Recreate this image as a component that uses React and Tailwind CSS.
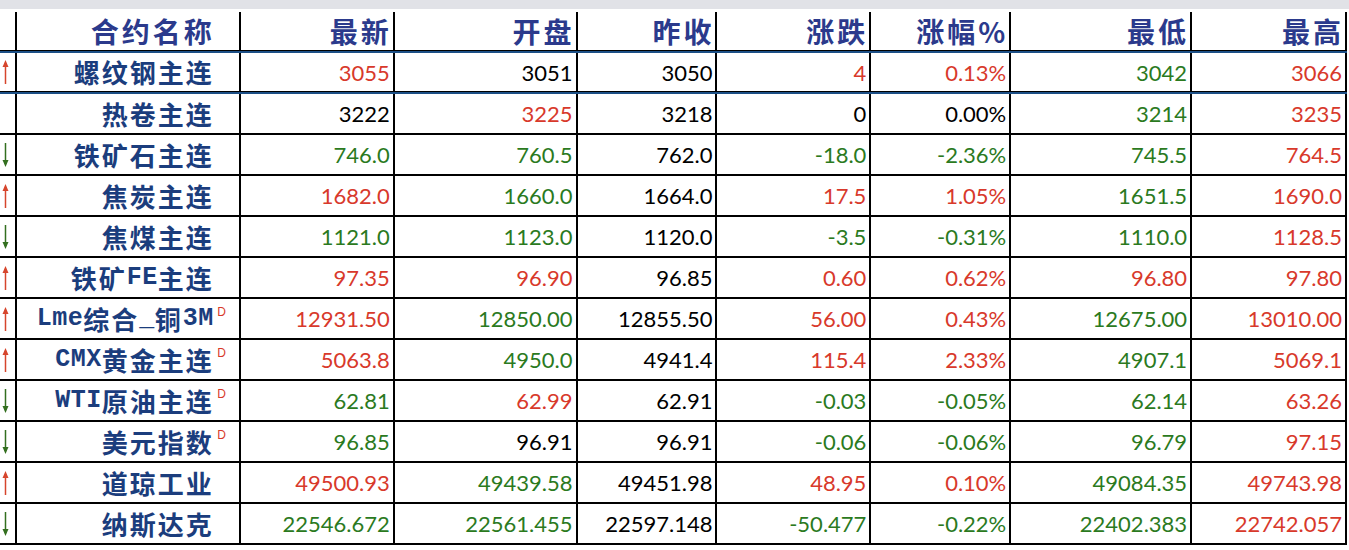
import React from "react";

const RED = "text-[#d8392b]";
const GREEN = "text-[#2b7a1e]";
const BLACK = "text-black";

const colorOf = (c) => (c === "r" ? RED : c === "g" ? GREEN : BLACK);

const widths = ["w-[154px]", "w-[183px]", "w-[140px]", "w-[154px]", "w-[140px]", "w-[181px]", "w-[155px]"];

const headers = ["最新", "开盘", "昨收", "涨跌", "涨幅%", "最低", "最高"];

const rows = [
  { dir: "up", name: <>螺纹钢主连</>, vals: ["3055", "3051", "3050", "4", "0.13%", "3042", "3066"], c: "rkkrrgr" },
  { dir: null, name: <>热卷主连</>, vals: ["3222", "3225", "3218", "0", "0.00%", "3214", "3235"], c: "krkkkgr" },
  { dir: "down", name: <>铁矿石主连</>, vals: ["746.0", "760.5", "762.0", "-18.0", "-2.36%", "745.5", "764.5"], c: "ggkgggr" },
  { dir: "up", name: <>焦炭主连</>, vals: ["1682.0", "1660.0", "1664.0", "17.5", "1.05%", "1651.5", "1690.0"], c: "rgkrrgr" },
  { dir: "down", name: <>焦煤主连</>, vals: ["1121.0", "1123.0", "1120.0", "-3.5", "-0.31%", "1110.0", "1128.5"], c: "ggkgggr" },
  {
    dir: "up",
    name: <>铁矿<Latin>FE</Latin>主连</>,
    vals: ["97.35", "96.90", "96.85", "0.60", "0.62%", "96.80", "97.80"],
    c: "rrkrrrr",
  },
  {
    dir: "up",
    d: true,
    name: <><Latin>Lme</Latin>综合<Latin>_</Latin>铜<Latin>3M</Latin></>,
    vals: ["12931.50", "12850.00", "12855.50", "56.00", "0.43%", "12675.00", "13010.00"],
    c: "rgkrrgr",
  },
  {
    dir: "up",
    d: true,
    name: <><Latin>CMX</Latin>黄金主连</>,
    vals: ["5063.8", "4950.0", "4941.4", "115.4", "2.33%", "4907.1", "5069.1"],
    c: "rgkrrgr",
  },
  {
    dir: "down",
    d: true,
    name: <><Latin>WTI</Latin>原油主连</>,
    vals: ["62.81", "62.99", "62.91", "-0.03", "-0.05%", "62.14", "63.26"],
    c: "grkgggr",
  },
  { dir: "down", d: true, name: <>美元指数</>, vals: ["96.85", "96.91", "96.91", "-0.06", "-0.06%", "96.79", "97.15"], c: "gkkgggr" },
  { dir: "up", name: <>道琼工业</>, vals: ["49500.93", "49439.58", "49451.98", "48.95", "0.10%", "49084.35", "49743.98"], c: "rgkrrgr" },
  {
    dir: "down",
    name: <>纳斯达克</>,
    vals: ["22546.672", "22561.455", "22597.148", "-50.477", "-0.22%", "22402.383", "22742.057"],
    c: "ggkgggr",
  },
];

// half-width latin letters in the contract names
function Latin({ children }) {
  return (
    <span className="font-['Liberation_Mono',monospace] text-[25px] font-bold tracking-[0.5px]">{children}</span>
  );
}

function Arrow({ dir }) {
  if (!dir) return null;
  const col = dir === "up" ? "#d6452c" : "#336f1f";
  return (
    <svg width="9" height="26" viewBox="0 0 9 26">
      {dir === "up" ? (
        <>
          <line x1="4.5" y1="4" x2="4.5" y2="25" stroke={col} strokeWidth="1.5" />
          <path d="M1.5 8 L4.5 1 L7.5 8 Z" fill={col} />
        </>
      ) : (
        <>
          <line x1="4.5" y1="1" x2="4.5" y2="22" stroke={col} strokeWidth="1.5" />
          <path d="M1.5 18 L4.5 25 L7.5 18 Z" fill={col} />
        </>
      )}
    </svg>
  );
}

const Separator = () => (
  <div className="w-[1347px]">
    <div className="h-px bg-black" />
    <div className="h-[2px] bg-[#1c4f86]" />
  </div>
);

function DataRow({ row, double }) {
  return (
    <div className={"flex w-[1347px] " + (double ? "h-[38px]" : "h-[41px] border-b-2 border-black")}>
      <div className="w-[17px] border-r-2 border-black flex items-center pl-[1px]">
        <Arrow dir={row.dir} />
      </div>
      <div className="relative w-[224px] border-r-2 border-black flex items-center justify-end pr-[25px] text-[26px] font-semibold tracking-[2px] text-[#1b3d7d] font-['Noto_Sans_CJK_SC',sans-serif] leading-none">
        {row.name}
        {row.d && (
          <span className="absolute right-[13px] top-[7px] text-[12px] font-normal tracking-normal text-[#d8392b] font-['Liberation_Sans',sans-serif]">
            D
          </span>
        )}
      </div>
      {row.vals.map((v, i) => (
        <div
          key={i}
          className={
            widths[i] +
            " border-r-2 border-black flex items-center justify-end pr-[3px] text-[22px] font-['Lato',sans-serif] " +
            colorOf(row.c[i])
          }
        >
          {v}
        </div>
      ))}
    </div>
  );
}

export default function App() {
  return (
    <div className="w-[1349px] h-[550px] bg-white overflow-hidden">
      <div className="h-[9px] bg-[#e1e2e7]" />
      <div className="mt-[3px]">
        <div className="flex w-[1347px] h-[38px]">
          <div className="w-[17px] border-r-2 border-black" />
          <div className="w-[224px] border-r-2 border-black flex items-center justify-end pr-[24px] text-[28px] font-semibold tracking-[3px] text-[#2b3a8c] font-['Noto_Sans_CJK_SC',sans-serif] leading-none">
            合约名称
          </div>
          {headers.map((h, i) => (
            <div
              key={h}
              className={
                widths[i] +
                " border-r-2 border-black flex items-center justify-end pr-[1px] text-[28px] font-semibold tracking-[3px] text-[#2b3a8c] font-['Noto_Sans_CJK_SC',sans-serif] leading-none"
              }
            >
              {h}
            </div>
          ))}
        </div>
        <Separator />
        {rows.map((r, i) => (
          <React.Fragment key={i}>
            <DataRow row={r} double={i === 0} />
            {i === 0 && <Separator />}
          </React.Fragment>
        ))}
      </div>
    </div>
  );
}
